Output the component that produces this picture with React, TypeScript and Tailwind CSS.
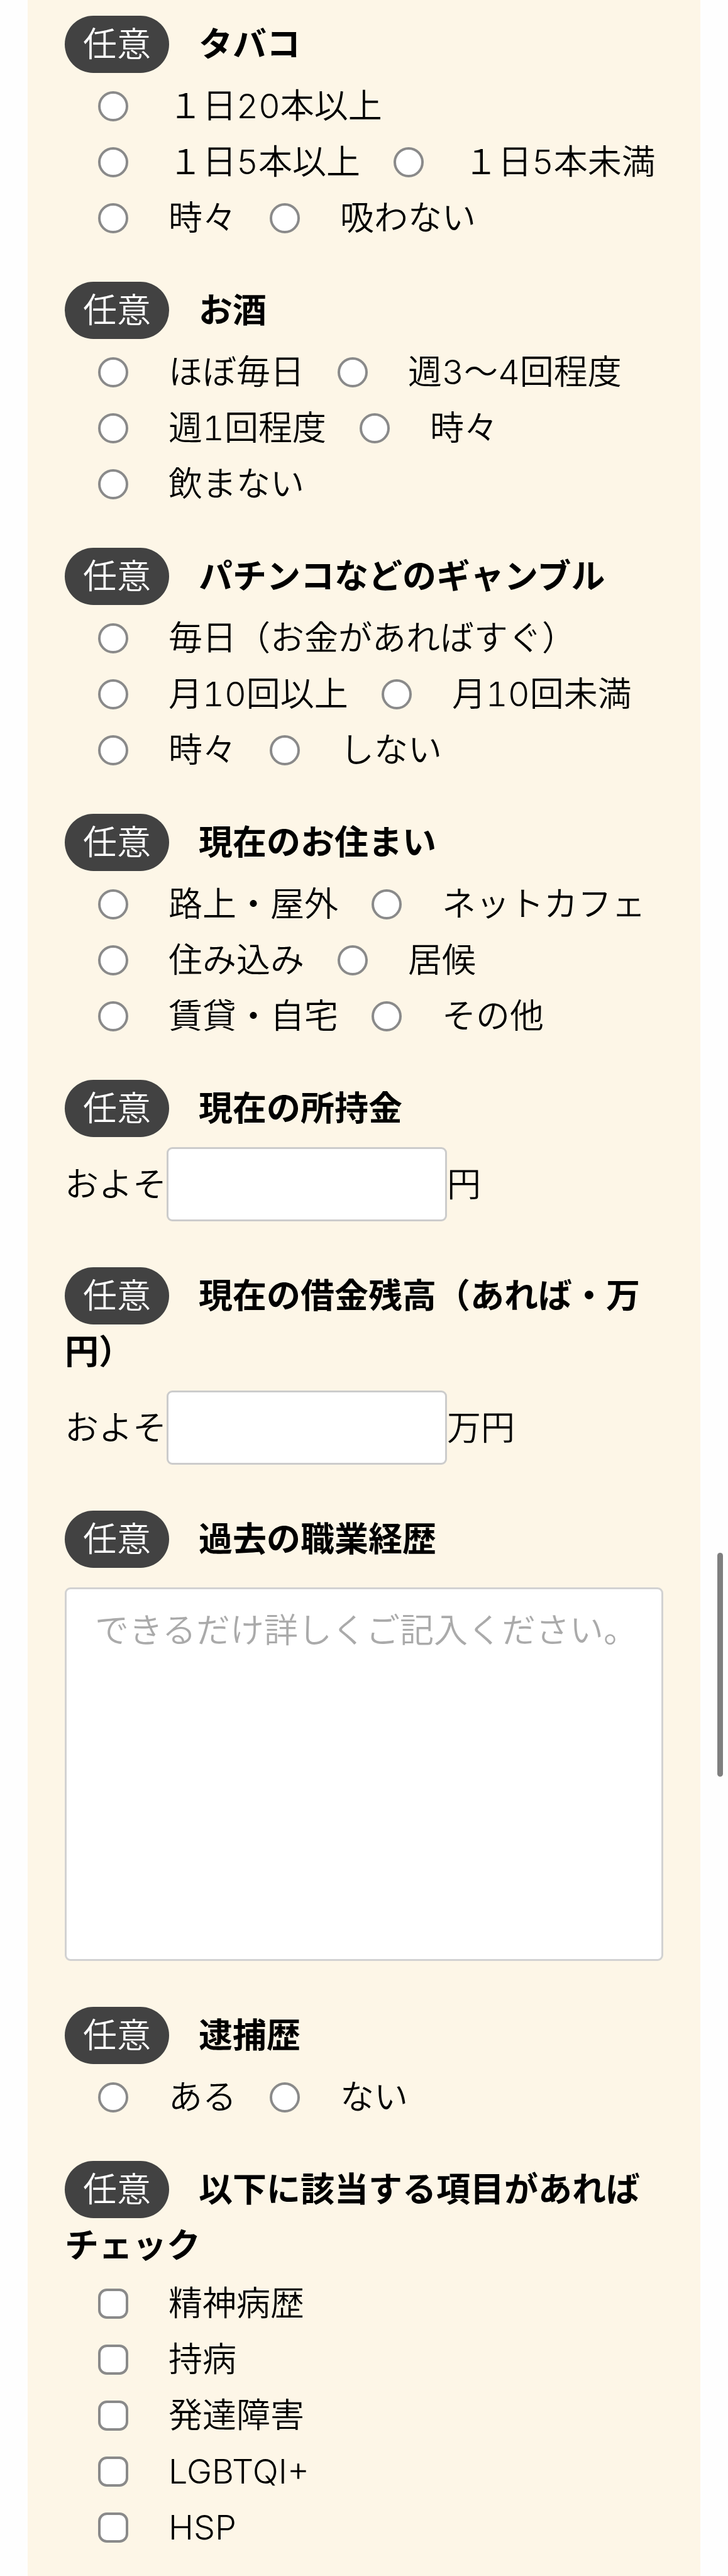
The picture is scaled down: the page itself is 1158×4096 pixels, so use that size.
import { useId, type ReactNode } from "react";

function Heading({ id, children }: { id?: string; children: ReactNode }) {
  return (
    <h2 id={id} className="text-[54px] font-bold leading-[89px]">
      <span className="mr-[47px] rounded-full bg-[#424242] px-[29px] py-[13px] font-[350] text-white">
        任意
      </span>
      {children}
    </h2>
  );
}

function RadioSection({ title, options }: { title: string; options: string[] }) {
  const id = useId();
  return (
    <section className="mb-[58px]" role="radiogroup" aria-labelledby={id}>
      <Heading id={id}>{title}</Heading>
      <div className="mt-[9px] flex flex-wrap">
        {options.map((option) => (
          <label key={option} className="flex items-center whitespace-nowrap leading-[89px]">
            <input
              type="radio"
              name={id}
              value={option}
              className="mr-16 ml-[53px] size-12 shrink-0 appearance-none rounded-full border-4 border-[#8a8a8a] bg-white checked:bg-[#424242]"
            />
            {option}
          </label>
        ))}
      </div>
    </section>
  );
}

function AmountSection({ title, unit }: { title: string; unit: string }) {
  const id = useId();
  return (
    <section className="mb-[58px]">
      <Heading id={id}>{title}</Heading>
      <label className="mt-[17px] flex items-center pb-4">
        およそ
        <input
          type="text"
          inputMode="numeric"
          aria-labelledby={id}
          className="h-[118px] w-[446px] rounded-[9px] border-3 border-[#cccccc] bg-white px-8"
        />
        {unit}
      </label>
    </section>
  );
}

const conditions = ["精神病歴", "持病", "発達障害", "LGBTQI+", "HSP"];

export default function App() {
  return (
    <div className="relative min-h-screen bg-[#fefefe] font-['Inter','Noto_Sans_CJK_JP',sans-serif] text-[54px] font-[350] tabular-nums text-black">
      <main className="mx-11 min-h-screen bg-[#fdf6e7] px-[59px] pt-[26px] pb-7">
        <form>
          <RadioSection
            title="タバコ"
            options={["１日20本以上", "１日5本以上", "１日5本未満", "時々", "吸わない"]}
          />
          <RadioSection
            title="お酒"
            options={["ほぼ毎日", "週3〜4回程度", "週1回程度", "時々", "飲まない"]}
          />
          <RadioSection
            title="パチンコなどのギャンブル"
            options={["毎日（お金があればすぐ）", "月10回以上", "月10回未満", "時々", "しない"]}
          />
          <RadioSection
            title="現在のお住まい"
            options={["路上・屋外", "ネットカフェ", "住み込み", "居候", "賃貸・自宅", "その他"]}
          />
          <AmountSection title="現在の所持金" unit="円" />
          <AmountSection title="現在の借金残高（あれば・万円）" unit="万円" />
          <section className="mb-[58px]">
            <Heading id="career">過去の職業経歴</Heading>
            <div className="pt-8 pb-4">
              <textarea
                aria-labelledby="career"
                placeholder="できるだけ詳しくご記入ください。"
                className="block h-[594px] w-full resize-none rounded-[9px] border-3 border-[#d2d2d2] bg-white pt-[25px] pr-[30px] pl-[45px] leading-[81px] placeholder:text-[#aaaaaa]"
              />
            </div>
          </section>
          <RadioSection title="逮捕歴" options={["ある", "ない"]} />
          <section role="group" aria-labelledby="conditions">
            <Heading id="conditions">以下に該当する項目があればチェック</Heading>
            <div className="mt-[3px] flex flex-col items-start">
              {conditions.map((item) => (
                <label key={item} className="flex items-center leading-[89px]">
                  <input
                    type="checkbox"
                    name="conditions"
                    value={item}
                    className="mr-16 ml-[53px] size-12 shrink-0 appearance-none rounded-[14px] border-4 border-[#8a8a8a] bg-white checked:bg-[#424242]"
                  />
                  {item}
                </label>
              ))}
            </div>
          </section>
        </form>
      </main>
      <div className="absolute top-[2469px] right-2 h-[356px] w-[9px] rounded-full bg-[#7f7f7f]" />
    </div>
  );
}
